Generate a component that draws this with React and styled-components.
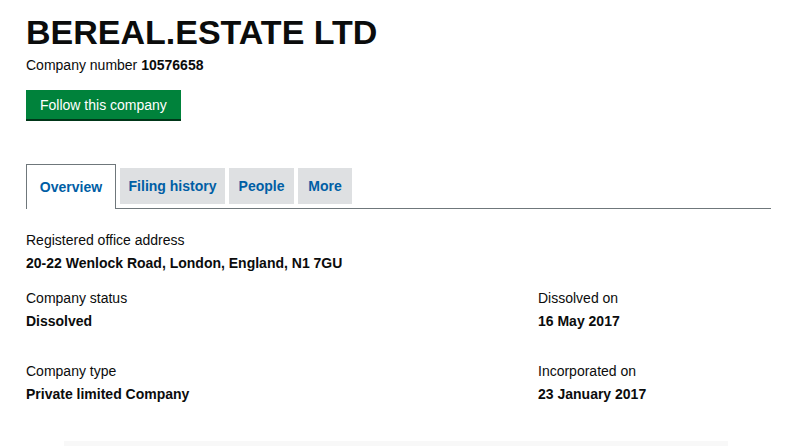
import React from "react";
import styled, { createGlobalStyle } from "styled-components";

const Global = createGlobalStyle`
  html, body { margin: 0; padding: 0; background: #ffffff; }
  body { font-family: "Liberation Sans", Arial, sans-serif; color: #0b0c0c; overflow: hidden; }
`;

const Page = styled.div`
  padding: 0 35px 0 26px;
  width: 806px;
  box-sizing: border-box;
`;

const Title = styled.h1`
  margin: 12px 0 0;
  font-size: 34px;
  line-height: 40px;
  font-weight: 700;
`;

const Number = styled.p`
  margin: 3px 0 0;
  font-size: 14px;
  line-height: 20px;
  b { font-weight: 700; }
`;

const FollowButton = styled.button`
  margin-top: 15px;
  height: 29px;
  padding: 0 14px;
  border: 0;
  background: #00823b;
  color: #ffffff;
  font-family: inherit;
  font-size: 14px;
  box-shadow: 0 2px 0 #003618;
  cursor: pointer;
`;

const Tabs = styled.div`
  margin-top: 45px;
  display: flex;
  align-items: flex-end;
  border-bottom: 1px solid #6f777b;
  height: 44px;
`;

const Tab = styled.div`
  box-sizing: border-box;
  flex: 0 0 auto;
  display: flex;
  align-items: center;
  justify-content: center;
  white-space: nowrap;
  padding: 0;
  width: ${(p) => p.$w}px;
  font-size: 14px;
  font-weight: 700;
  color: #005ea5;
  ${(p) =>
    p.$active
      ? `
    height: 45px;
    margin-bottom: -1px;
    background: #fff;
    border: 1px solid #6f777b;
    border-bottom: 0;
  `
      : `
    height: 36px;
    margin: 0 0 4px 4px;
    background: #dee0e2;
  `}
`;

const Block = styled.div`
  margin-top: ${(p) => p.$mt}px;
`;

const Row = styled.div`
  display: grid;
  grid-template-columns: 512px 1fr;
  margin-top: ${(p) => p.$mt}px;
`;

const Label = styled.div`
  font-size: 14px;
  line-height: 20px;
`;

const Value = styled.div`
  margin-top: 3px;
  font-size: 14px;
  line-height: 20px;
  font-weight: 700;
`;

const Faint = styled.div`
  margin: 37px 0 0 38px;
  width: 664px;
  height: 20px;
  background: #f8f8f8;
`;

function Field({ label, value }) {
  return (
    <div>
      <Label>{label}</Label>
      <Value>{value}</Value>
    </div>
  );
}

export default function App() {
  return (
    <>
      <Global />
      <Page>
        <Title>BEREAL.ESTATE LTD</Title>
        <Number>
          Company number <b>10576658</b>
        </Number>
        <FollowButton>Follow this company</FollowButton>
        <Tabs>
          <Tab $active $w={90}>Overview</Tab>
          <Tab $w={105}>Filing history</Tab>
          <Tab $w={65}>People</Tab>
          <Tab $w={54}>More</Tab>
        </Tabs>
        <Block $mt={21}>
          <Field label="Registered office address" value="20-22 Wenlock Road, London, England, N1 7GU" />
        </Block>
        <Row $mt={15}>
          <Field label="Company status" value="Dissolved" />
          <Field label="Dissolved on" value="16 May 2017" />
        </Row>
        <Row $mt={30}>
          <Field label="Company type" value="Private limited Company" />
          <Field label="Incorporated on" value="23 January 2017" />
        </Row>
        <Faint />
      </Page>
    </>
  );
}
